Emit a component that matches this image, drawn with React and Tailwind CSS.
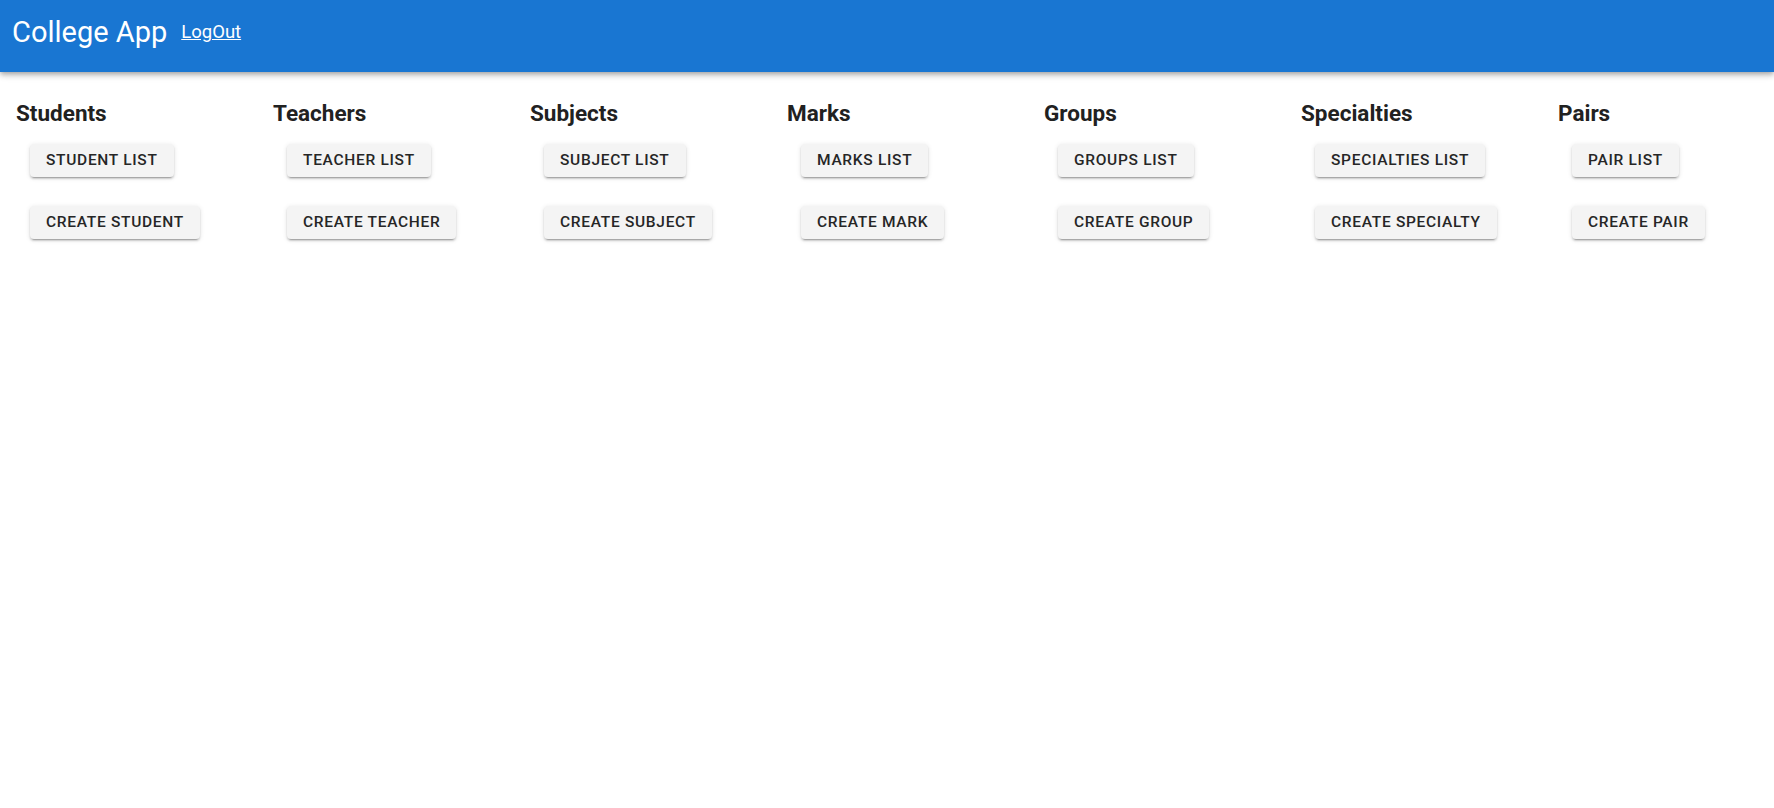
import React from 'react';

const sections = [
  { title: 'Students', list: 'Student List', create: 'Create Student' },
  { title: 'Teachers', list: 'Teacher List', create: 'Create Teacher' },
  { title: 'Subjects', list: 'Subject List', create: 'Create Subject' },
  { title: 'Marks', list: 'Marks List', create: 'Create Mark' },
  { title: 'Groups', list: 'Groups List', create: 'Create Group' },
  { title: 'Specialties', list: 'Specialties List', create: 'Create Specialty' },
  { title: 'Pairs', list: 'Pair List', create: 'Create Pair' },
];

function NavButton({ children }) {
  return (
    <button className="h-[33px] px-[16px] rounded-[4px] bg-[#f4f4f4] text-[#262626] text-[15.5px] font-medium uppercase tracking-[0.7px] shadow-[0_3px_1px_-2px_rgba(0,0,0,0.2),0_2px_2px_0_rgba(0,0,0,0.14),0_1px_5px_0_rgba(0,0,0,0.12)]">
      {children}
    </button>
  );
}

export default function App() {
  return (
    <div className="min-h-screen bg-white font-['Roboto',sans-serif]">
      <header className="h-[72px] bg-[#1976d2] text-white flex items-start pl-[12px] pt-[13px] gap-[14px] shadow-[0_2px_4px_-1px_rgba(0,0,0,0.2),0_4px_5px_0_rgba(0,0,0,0.14),0_1px_10px_0_rgba(0,0,0,0.12)]">
        <h1 className="text-[29px] leading-[38px]">College App</h1>
        <a href="#" className="text-[18.5px] leading-[38px] underline">LogOut</a>
      </header>
      <main className="grid grid-cols-[repeat(7,257px)] pl-[16px] pt-[25px]">
        {sections.map((s) => (
          <section key={s.title} className="flex flex-col">
            <h2 className="text-[22.5px] leading-[32px] font-bold text-[#212121]">{s.title}</h2>
            <div className="flex flex-col items-start gap-[29px] pl-[14px] pt-[15px]">
              <NavButton>{s.list}</NavButton>
              <NavButton>{s.create}</NavButton>
            </div>
          </section>
        ))}
      </main>
    </div>
  );
}
